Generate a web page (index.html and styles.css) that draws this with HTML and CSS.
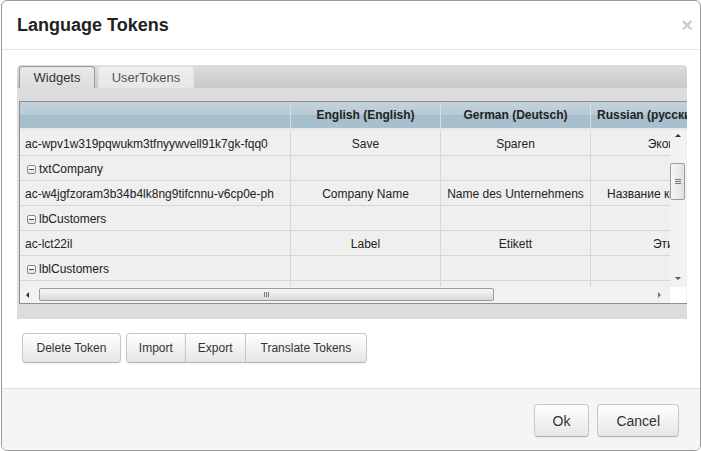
FILE: index.html
```html
<!DOCTYPE html>
<html>
<head>
<meta charset="utf-8">
<title>Language Tokens</title>
<link rel="stylesheet" href="styles.css">
</head>
<body>
<div class="modal">
  <div class="modal-header">
    <h3 class="title">Language Tokens</h3>
    <span class="close">×</span>
  </div>
  <div class="modal-body">
    <div class="tabs">
      <div class="tab-nav">
        <div class="tab tab-active">Widgets</div>
        <div class="tab tab-user">UserTokens</div>
      </div>
      <div class="tab-panel">
        <div class="grid">
          <div class="grid-head">
            <div class="hcell c1"></div>
            <div class="hcell c2">English (English)</div>
            <div class="hcell c3">German (Deutsch)</div>
            <div class="hcell c4 start">Russian (русский)</div>
          </div>
          <div class="grid-mid">
            <div class="viewport">
              <div class="row">
                <div class="cell c1 key">ac-wpv1w319pqwukm3tfnyywvell91k7gk-fqq0</div>
                <div class="cell c2">Save</div>
                <div class="cell c3">Sparen</div>
                <div class="cell c4">Экономить</div>
              </div>
              <div class="row">
                <div class="cell c1 key group"><span class="toggle"></span>txtCompany</div>
                <div class="cell c2"></div>
                <div class="cell c3"></div>
                <div class="cell c4"></div>
              </div>
              <div class="row">
                <div class="cell c1 key">ac-w4jgfzoram3b34b4lk8ng9tifcnnu-v6cp0e-ph</div>
                <div class="cell c2">Company Name</div>
                <div class="cell c3">Name des Unternehmens</div>
                <div class="cell c4 start">Название компании</div>
              </div>
              <div class="row">
                <div class="cell c1 key group"><span class="toggle"></span>lbCustomers</div>
                <div class="cell c2"></div>
                <div class="cell c3"></div>
                <div class="cell c4"></div>
              </div>
              <div class="row">
                <div class="cell c1 key">ac-lct22il</div>
                <div class="cell c2">Label</div>
                <div class="cell c3">Etikett</div>
                <div class="cell c4">Этикетка</div>
              </div>
              <div class="row">
                <div class="cell c1 key group"><span class="toggle"></span>lblCustomers</div>
                <div class="cell c2"></div>
                <div class="cell c3"></div>
                <div class="cell c4"></div>
              </div>
              <div class="row">
                <div class="cell c1 key"></div>
                <div class="cell c2"></div>
                <div class="cell c3"></div>
                <div class="cell c4"></div>
              </div>
            </div>
            <div class="vscroll">
              <span class="arrow arrow-up"></span>
              <div class="vtrack">
                <div class="vthumb"><span class="vgrip"></span></div>
              </div>
              <span class="arrow arrow-down"></span>
            </div>
          </div>
          <div class="grid-foot">
            <div class="hscroll">
              <span class="arrow arrow-left"></span>
              <div class="htrack">
                <div class="hthumb"><span class="hgrip"></span></div>
              </div>
              <span class="arrow arrow-right"></span>
            </div>
            <div class="corner"></div>
          </div>
        </div>
      </div>
    </div>
    <div class="toolbar">
      <button class="btn btn-delete">Delete Token</button>
      <div class="btn-group">
        <button class="btn">Import</button>
        <button class="btn">Export</button>
        <button class="btn btn-translate">Translate Tokens</button>
      </div>
    </div>
  </div>
  <div class="modal-footer">
    <button class="btn btn-lg btn-ok">Ok</button>
    <button class="btn btn-lg">Cancel</button>
  </div>
</div>
</body>
</html>
```

FILE: styles.css
```css
* { box-sizing: border-box; }
html, body { margin: 0; padding: 0; background: #fff; }
body {
  font-family: "Liberation Sans", Arial, sans-serif;
  color: #333;
  width: 701px;
  height: 451px;
  overflow: hidden;
}

.modal {
  margin-left: 1px;
  width: 700px;
  height: 451px;
  border: 1px solid #9a9a9a;
  border-radius: 6px;
  background: #fff;
  display: flex;
  flex-direction: column;
  overflow: hidden;
}

/* header */
.modal-header {
  height: 49px;
  padding: 14px 13px 14px 15px;
  border-bottom: 1px solid #e5e5e5;
  display: flex;
  justify-content: space-between;
  align-items: flex-start;
  flex-shrink: 0;
}
.title {
  margin: 0;
  font-size: 18px;
  line-height: 20px;
  font-weight: bold;
  color: #222;
}
.close {
  font-size: 20px;
  line-height: 20px;
  font-weight: bold;
  color: #000;
  opacity: 0.2;
  margin-right: -6px;
}

/* body */
.modal-body {
  padding: 15px 13px 25px 15px;
  flex-shrink: 0;
}

.tab-nav {
  height: 23px;
  padding: 1px 0 0 2px;
  display: flex;
  gap: 3px;
  background: linear-gradient(#dddddd, #c9c9c9);
  border-radius: 4px 4px 0 0;
}
.tab {
  height: 22px;
  font-size: 13px;
  line-height: 21px;
  text-align: center;
  border: 1px solid #e2e2e2;
  border-bottom: 0;
  border-radius: 4px 4px 0 0;
  background: linear-gradient(#efefef, #e6e6e6);
  color: #555;
}
.tab-active {
  width: 76px;
  border-color: #9a9a9a;
  background: linear-gradient(#e9e9e9, #dddddd);
  color: #333;
}
.tab-user { width: 96px; }

.tab-panel {
  height: 231px;
  padding: 13px 0 15px 2px;
  background: #dcdcdc;
}

.grid {
  height: 203px;
  border: 1px solid #8e8e8e;
  border-right: 0;
  background: #efefef;
  display: flex;
  flex-direction: column;
  overflow: hidden;
}

.grid-head {
  height: 28px;
  flex-shrink: 0;
  display: flex;
  overflow: hidden;
  border-bottom: 2px solid #e3eaef;
  background: linear-gradient(#c3d3dd, #b7cad6 48%, #a6bdcc 52%, #a9c0ce);
}
.hcell {
  flex-shrink: 0;
  height: 26px;
  line-height: 26px;
  font-size: 12px;
  font-weight: bold;
  color: #222;
  text-align: center;
  white-space: nowrap;
  overflow: hidden;
  padding: 0 6px;
  border-right: 1px solid #d3dee6;
}

.c1 { width: 271px; }
.c2 { width: 150px; }
.c3 { width: 150px; }
.c4 { width: 175px; }
.hcell.start { text-align: left; }

.grid-mid {
  height: 157px;
  flex-shrink: 0;
  display: flex;
}
.viewport {
  width: 650px;
  height: 157px;
  padding-top: 1px;
  overflow: hidden;
  flex-shrink: 0;
}
.row {
  display: flex;
  height: 25px;
}
.cell {
  flex-shrink: 0;
  height: 25px;
  padding: 2px 6px 0;
  line-height: 22px;
  font-size: 12px;
  color: #222;
  text-align: center;
  white-space: nowrap;
  overflow: hidden;
  border-right: 1px solid #d6d6d6;
  border-bottom: 1px solid #d6d6d6;
}
.cell.start {
  text-align: left;
  padding-left: 16px;
}
.key {
  text-align: left;
  padding-left: 5px;
}
.group {
  display: flex;
  align-items: center;
  padding-left: 7px;
}
.toggle {
  width: 9px;
  height: 9px;
  margin-right: 3px;
  border: 1px solid #8a8a8a;
  border-radius: 2px;
  background: linear-gradient(#ffffff, #e3e3e3);
  position: relative;
  flex-shrink: 0;
}
.toggle::after {
  content: "";
  position: absolute;
  left: 1px;
  top: 3px;
  width: 5px;
  height: 1px;
  background: #444;
}

/* vertical scrollbar */
.vscroll {
  width: 16px;
  flex-shrink: 0;
  background: #f2f2f2;
  display: flex;
  flex-direction: column;
  align-items: center;
}
.vtrack {
  flex: 1;
  width: 100%;
  padding-top: 22px;
}
.vthumb {
  width: 15px;
  height: 37px;
  border: 1px solid #9c9c9c;
  border-radius: 2px;
  background: linear-gradient(90deg, #f7f7f7, #e0e0e0);
  display: flex;
  align-items: center;
  justify-content: center;
}
.vgrip {
  width: 6px;
  height: 5px;
  border-top: 1px solid #777;
  border-bottom: 1px solid #777;
  position: relative;
}
.vgrip::after {
  content: "";
  position: absolute;
  left: 0;
  top: 1px;
  width: 6px;
  height: 1px;
  background: #777;
}

.arrow {
  width: 0;
  height: 0;
  flex-shrink: 0;
}
.arrow-up {
  margin-top: 4px;
  margin-bottom: 4px;
  border-left: 3px solid transparent;
  border-right: 3px solid transparent;
  border-bottom: 3px solid #333;
}
.arrow-down {
  margin-top: 4px;
  margin-bottom: 7px;
  border-left: 3px solid transparent;
  border-right: 3px solid transparent;
  border-top: 3px solid #555;
}

/* horizontal scrollbar */
.grid-foot {
  height: 16px;
  flex-shrink: 0;
  display: flex;
}
.hscroll {
  width: 650px;
  flex-shrink: 0;
  background: #f2f2f2;
  display: flex;
  align-items: center;
}
.arrow-left {
  margin-left: 6px;
  border-top: 3px solid transparent;
  border-bottom: 3px solid transparent;
  border-right: 3px solid #333;
}
.arrow-right {
  margin-right: 9px;
  border-top: 3px solid transparent;
  border-bottom: 3px solid transparent;
  border-left: 3px solid #777;
}
.htrack {
  flex: 1;
  height: 16px;
  padding: 1px 0 0 10px;
}
.hthumb {
  width: 455px;
  height: 13px;
  border: 1px solid #9c9c9c;
  border-radius: 2px;
  background: linear-gradient(#f7f7f7, #d9d9d9);
  display: flex;
  align-items: center;
  justify-content: center;
}
.hgrip {
  width: 5px;
  height: 5px;
  border-left: 1px solid #777;
  border-right: 1px solid #777;
  position: relative;
}
.hgrip::after {
  content: "";
  position: absolute;
  left: 1px;
  top: 0;
  width: 1px;
  height: 5px;
  background: #777;
}
.corner {
  width: 16px;
  background: #fff;
}

/* toolbar */
.toolbar {
  margin-top: 14px;
  padding-left: 5px;
  display: flex;
  gap: 5px;
}
.btn {
  height: 30px;
  padding: 0 12px;
  font-family: "Liberation Sans", Arial, sans-serif;
  font-size: 12px;
  color: #333;
  border: 1px solid #c8c8c8;
  border-bottom-color: #b3b3b3;
  border-radius: 4px;
  background: linear-gradient(#ffffff, #e6e6e6);
  box-shadow: inset 0 1px 0 rgba(255,255,255,.2), 0 1px 2px rgba(0,0,0,.05);
  cursor: pointer;
}
.btn-delete { padding: 0 13.5px; }
.btn-translate { padding: 0 15px; }
.btn-group { display: flex; }
.btn-group .btn { border-radius: 0; }
.btn-group .btn + .btn { margin-left: -1px; }
.btn-group .btn:first-child { border-radius: 4px 0 0 4px; }
.btn-group .btn:last-child { border-radius: 0 4px 4px 0; }

/* footer */
.modal-footer {
  flex: 1;
  background: #f5f5f5;
  border-top: 1px solid #dddddd;
  padding: 15px 21px 0 0;
  display: flex;
  justify-content: flex-end;
  align-items: flex-start;
  gap: 8px;
}
.btn-lg {
  height: 33px;
  font-size: 14px;
  padding: 0 18px;
}
.btn-ok { padding: 0 18px; }
```
